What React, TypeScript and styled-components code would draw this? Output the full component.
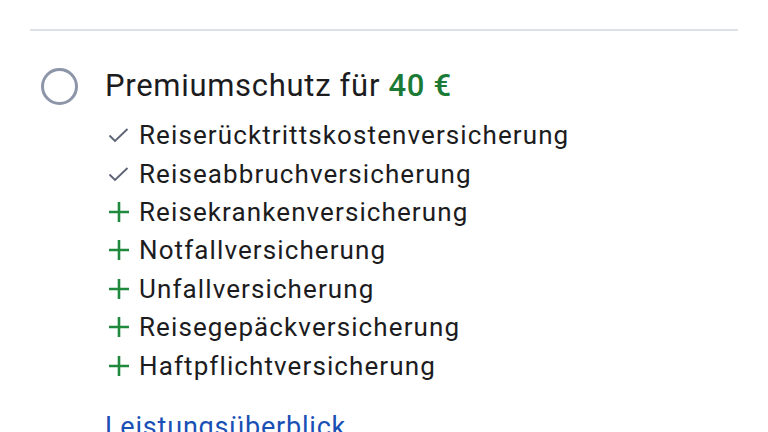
import styled, { createGlobalStyle } from "styled-components";

const GlobalStyle = createGlobalStyle`
  html, body {
    margin: 0;
    padding: 0;
    background: #ffffff;
    overflow: hidden;
  }
  body {
    font-family: Roboto, "Noto Sans", sans-serif;
    color: #1c1c1e;
  }
`;

const Page = styled.div`
  width: 768px;
  height: 432px;
  padding: 29px 30px 0 30px;
  box-sizing: border-box;
`;

const Divider = styled.hr`
  margin: 0;
  border: none;
  height: 2px;
  width: 708px;
  background: #dde1ea;
`;

const Option = styled.div`
  display: flex;
  align-items: flex-start;
  margin-top: 35px;
  padding-left: 11px;
`;

const Radio = styled.span`
  flex: none;
  width: 37px;
  height: 37px;
  border-radius: 50%;
  border: 3px solid #8d95a9;
  box-sizing: border-box;
  margin-top: 2px;
`;

const Body = styled.div`
  margin-left: 27px;
  display: flex;
  flex-direction: column;
  align-items: flex-start;
`;

const Title = styled.div`
  font-size: 31px;
  line-height: 40px;
  letter-spacing: 0.7px;
  color: #1c1c1e;
`;

const Price = styled.span`
  color: #1b7a35;
  font-weight: 500;
`;

const List = styled.ul`
  list-style: none;
  margin: 10px 0 0 0;
  padding: 0;
`;

const Item = styled.li`
  display: flex;
  align-items: center;
  height: 38.4px;
  font-size: 26px;
  letter-spacing: 1.1px;
  color: #1c1c1e;
`;

const IconBox = styled.span`
  flex: none;
  width: 34px;
  display: flex;
  align-items: center;
  padding-left: 3px;
  box-sizing: border-box;
`;

const Link = styled.a`
  margin-top: 26px;
  font-size: 27px;
  color: #1a4fb5;
  text-decoration: none;
  letter-spacing: 0.8px;
`;

const Check = () => (
  <svg width="21" height="16" viewBox="0 0 21 16">
    <path d="M1.5 8.5 L7 14 L19.5 2" fill="none" stroke="#5b6272" strokeWidth="1.8" />
  </svg>
);

const Plus = () => (
  <svg width="22" height="22" viewBox="0 0 22 22">
    <path d="M11 1 V21 M1 11 H21" fill="none" stroke="#1f8a3d" strokeWidth="2.6" />
  </svg>
);

const items: { kind: "check" | "plus"; label: string }[] = [
  { kind: "check", label: "Reiserücktrittskostenversicherung" },
  { kind: "check", label: "Reiseabbruchversicherung" },
  { kind: "plus", label: "Reisekrankenversicherung" },
  { kind: "plus", label: "Notfallversicherung" },
  { kind: "plus", label: "Unfallversicherung" },
  { kind: "plus", label: "Reisegepäckversicherung" },
  { kind: "plus", label: "Haftpflichtversicherung" },
];

export default function App() {
  return (
    <Page>
      <GlobalStyle />
      <Divider />
      <Option>
        <Radio />
        <Body>
          <Title>
            Premiumschutz für <Price>40 €</Price>
          </Title>
          <List>
            {items.map((it) => (
              <Item key={it.label}>
                <IconBox>{it.kind === "check" ? <Check /> : <Plus />}</IconBox>
                {it.label}
              </Item>
            ))}
          </List>
          <Link href="#">Leistungsüberblick</Link>
        </Body>
      </Option>
    </Page>
  );
}
